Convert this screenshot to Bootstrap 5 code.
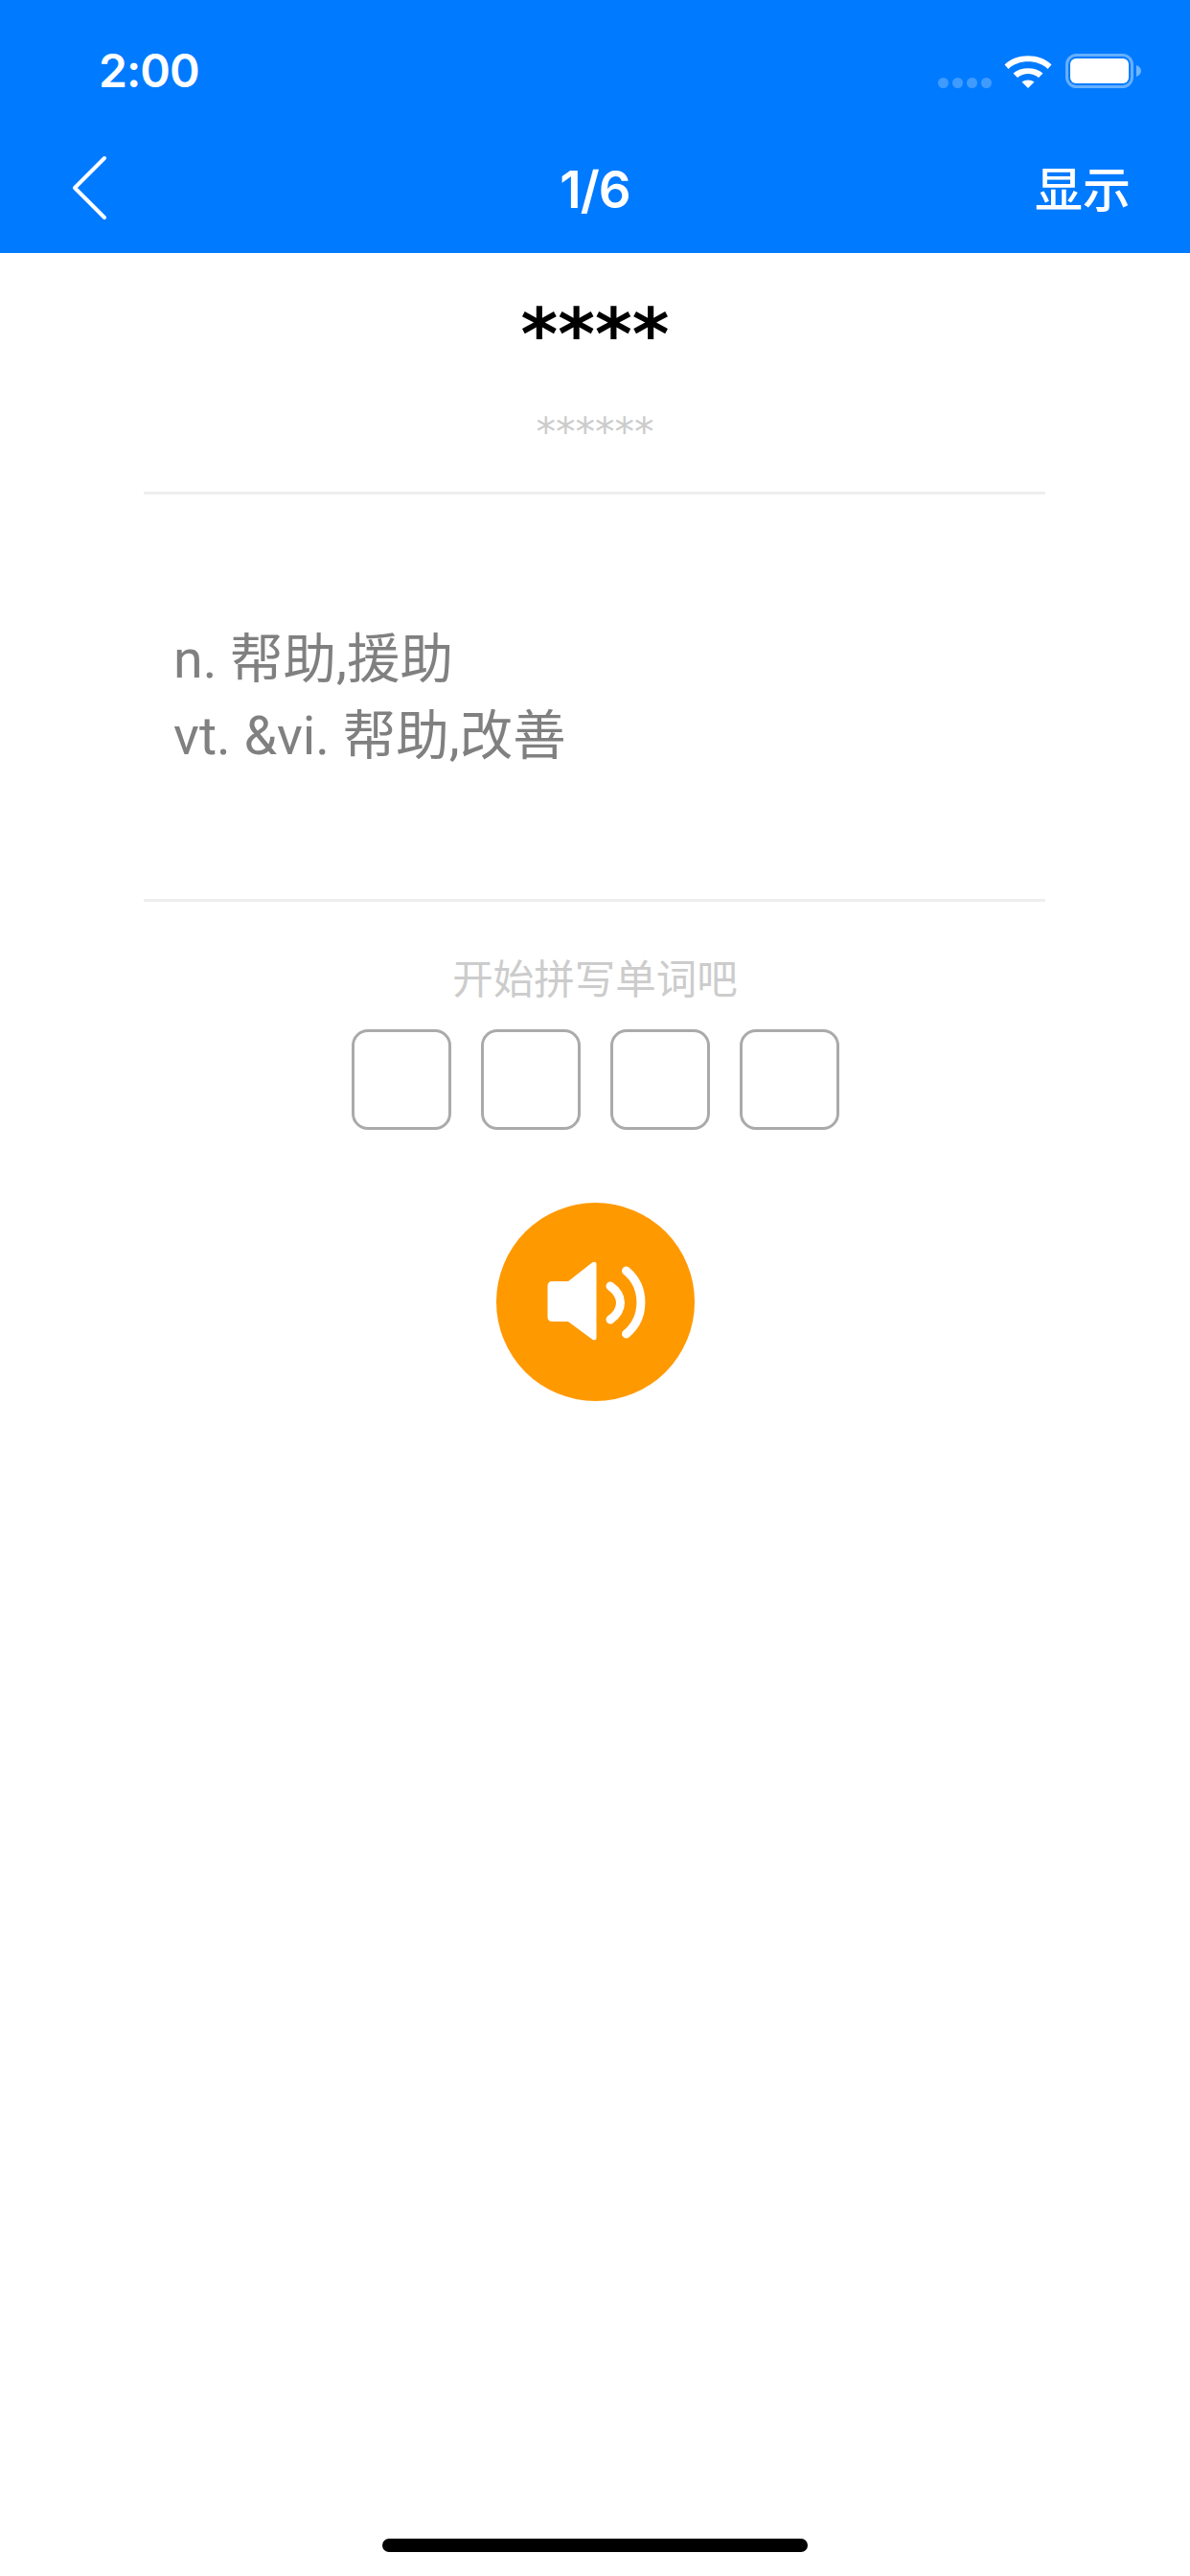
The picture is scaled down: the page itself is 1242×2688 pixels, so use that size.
<!DOCTYPE html>
<html lang="zh-CN">
<head>
  <meta charset="UTF-8" />
  <meta name="viewport" content="width=device-width, initial-scale=1" />
  <title>1/6</title>
  <link href="https://cdn.jsdelivr.net/npm/bootstrap@5.3.0/dist/css/bootstrap.min.css" rel="stylesheet" />
  <style>
    body { font-family: Inter, "Noto Sans CJK SC", sans-serif; background: #fff; }
    .page-wrap { height: 2688px; width: 1242px; }
    .top-bar { background: #007aff; height: 264px; color: #fff; }
    .status-row { height: 132px; padding: 56px 51px 0 103px; }
    .clock { font-size: 48px; font-weight: 600; line-height: 36px; letter-spacing: -1px; }
    .sig-dots { margin-top: 25px; margin-right: 13px; gap: 4px; }
    .sig-dots span { width: 11px; height: 11px; border-radius: 50%; background: rgba(255,255,255,.25); }
    .wifi-icon { margin-right: 14px; }
    .nav-row { height: 132px; padding: 0 62px; }
    .back-icon { margin-left: 14px; overflow: visible; }
    .nav-title { font-size: 53px; font-weight: 600; line-height: 60px; letter-spacing: -1px; }
    .nav-action { font-size: 50px; font-weight: 500; line-height: 60px; }
    .word-main { font-family: "DejaVu Sans", sans-serif; font-weight: 700; font-size: 74px; line-height: 60px; color: #000; margin-top: 55px; height: 60px; }
    .word-sub { font-family: "DejaVu Sans", sans-serif; font-size: 41px; line-height: 40px; color: #ccc; margin-top: 52px; }
    .rule-line { height: 3px; background: #eee; margin: 0 151px 0 150px; }
    .rule-first { margin-top: 42px; }
    .meaning { height: 422px; padding: 3px 31px 0; margin: 0 150px; display: flex; flex-direction: column; justify-content: center; font-family: Roboto, "Noto Sans CJK SC", sans-serif; font-size: 55.5px; line-height: 80px; color: #808080; }
    .spell-hint { font-size: 42.5px; line-height: 50px; color: #ccc; margin-top: 56px; }
    .letter-box { width: 104px; height: 105px; border: 3px solid #aaa; border-radius: 17px; }
    .letter-row { gap: 31px; margin-top: 27px; }
    .sound-btn { width: 207px; height: 207px; background: #f90; border: 0; padding: 0; margin-top: 76px; }
    .home-bar { width: 444px; height: 14px; background: #000; margin-bottom: 25px; }
  </style>
</head>
<body>
  <div class="page-wrap d-flex flex-column">
    <div class="top-bar">
      <div class="status-row d-flex align-items-start">
        <div class="clock">2:00</div>
        <div class="sig-dots d-flex ms-auto"><span></span><span></span><span></span><span></span></div>
        <svg class="wifi-icon" width="50" height="36" viewBox="0 0 50 36">
          <path d="M0.5 11.5C13 -0.8 37 -0.8 49.5 11.5L45.5 16C35 5.8 15 5.8 4.5 16Z" fill="#fff" />
          <path d="M9.5 20.5C17 13.5 33 13.5 40.5 20.5L36 25C29.5 19.8 20.5 19.8 14 25Z" fill="#fff" />
          <path d="M18.5 29.5C22 26.8 28 26.8 31.5 29.5L25 36Z" fill="#fff" />
        </svg>
        <svg width="79" height="36" viewBox="0 0 79 36">
          <rect x="1.5" y="1.5" width="68" height="33" rx="10" fill="none" stroke="#fff" stroke-opacity=".4" stroke-width="3" />
          <rect x="5" y="5" width="61" height="26" rx="6" fill="#fff" />
          <path d="M74 12C77 13 79 15.5 79 18C79 20.5 77 23 74 24Z" fill="#fff" fill-opacity=".45" />
        </svg>
      </div>
      <nav class="nav-row d-flex align-items-center">
        <div class="col">
          <svg class="back-icon d-block" width="36" height="66" viewBox="0 0 36 66">
            <path d="M33 0L2 31L33 62" fill="none" stroke="#fff" stroke-width="4" stroke-linecap="round" stroke-linejoin="round" />
          </svg>
        </div>
        <div class="nav-title col text-center">1/6</div>
        <div class="nav-action col text-end">显示</div>
      </nav>
    </div>

    <div class="word-main text-center">****</div>
    <div class="word-sub text-center">******</div>
    <div class="rule-line rule-first"></div>
    <div class="meaning">
      <div>n. 帮助,援助</div>
      <div>vt. &amp;vi. 帮助,改善</div>
    </div>
    <div class="rule-line"></div>

    <div class="spell-hint text-center">开始拼写单词吧</div>
    <div class="letter-row d-flex justify-content-center">
      <div class="letter-box"></div>
      <div class="letter-box"></div>
      <div class="letter-box"></div>
      <div class="letter-box"></div>
    </div>
    <button type="button" class="sound-btn rounded-circle d-flex align-items-center justify-content-center align-self-center">
      <svg width="207" height="207" viewBox="0 0 207 207">
        <path d="M58 82H73C75 82 76 81.500 77 80.500L100 62.500C102 61 104.500 61.500 104.500 64V141C104.500 143.500 102 144 100 142.500L77 125.500C76 124.500 75 124 73 124H58C55.500 124 53.500 122 53.500 119.500V86.500C53.500 84 55.500 82 58 82Z" fill="#fff" />
        <path d="M119 87C133 97 133 112 119 122" fill="none" stroke="#fff" stroke-width="9" stroke-linecap="round" />
        <path d="M135.500 71C156 88 156 120 135.500 137" fill="none" stroke="#fff" stroke-width="9" stroke-linecap="round" />
      </svg>
    </button>
    <div class="home-bar rounded-pill align-self-center mt-auto"></div>
  </div>
  <script src="https://cdn.jsdelivr.net/npm/bootstrap@5.3.0/dist/js/bootstrap.bundle.min.js"></script>
</body>
</html>
